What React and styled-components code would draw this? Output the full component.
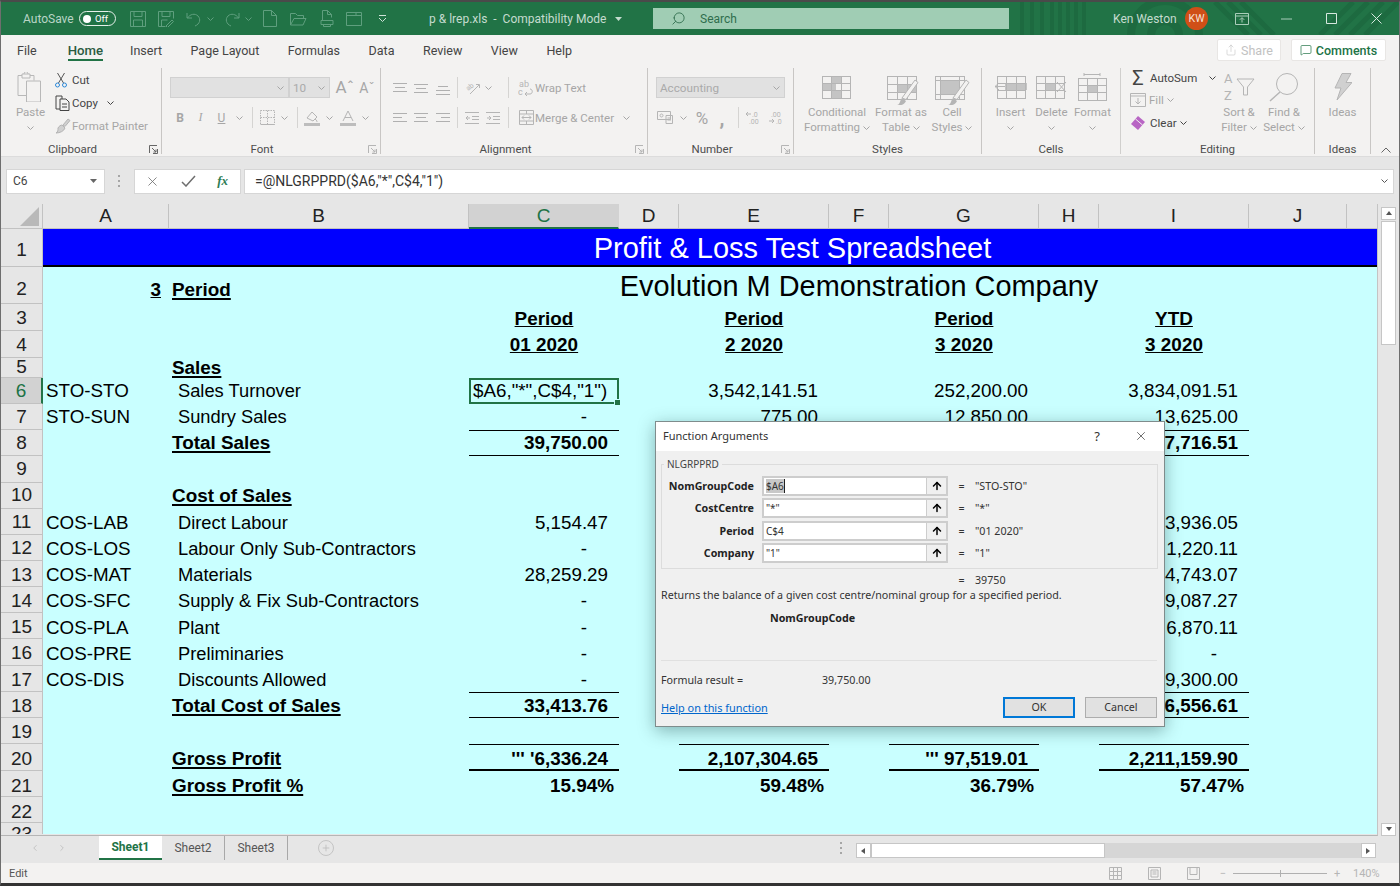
import React from "react";
import styled, { createGlobalStyle } from "styled-components";
import { Search, MessageSquare, Share, ArrowUp, X, Plus, ChevronLeft, ChevronRight } from "lucide-react";

const GlobalStyle = createGlobalStyle`
  html, body { margin: 0; padding: 0; background: #3c3c3c; }
  * { box-sizing: border-box; }
  body { font-family: "Roboto", "Noto Sans", sans-serif; }
`;

const DIS = "#a6a6a6";
const DARK = "#444";

const Window = styled.div`
  position: relative;
  width: 1400px;
  height: 886px;
  display: flex;
  flex-direction: column;
  overflow: hidden;
  background: #e6e6e6;
  border-top: 2px solid #4a4a4a;
  border-left: 1px solid #6e6e6e;
  border-right: 1px solid #6e6e6e;
  border-bottom: 3px solid #333;
`;

/* ---------- title bar ---------- */
const TitleBar = styled.div`
  position: relative;
  height: 33px;
  flex: none;
  display: flex;
  align-items: center;
  background: #217346;
  color: #cfe3d8;
  font-size: 12px;
  padding-left: 22px;
`;
const TitlePattern = styled.svg`
  position: absolute;
  left: 999px;
  top: 0;
  pointer-events: none;
`;
const AutoSave = styled.span`
  width: 56px;
  color: #b9d5c6;
  position: relative;
`;
const Toggle = styled.span`
  position: relative;
  width: 37px;
  height: 15px;
  border: 1.5px solid #e6f0ea;
  border-radius: 8px;
  display: flex;
  align-items: center;
  padding-left: 3px;
  gap: 4px;
  font-size: 9.5px;
  color: #fff;
  &::before {
    content: "";
    width: 8px;
    height: 8px;
    border-radius: 50%;
    background: #fff;
  }
`;
const QuickSlot = styled.span`
  position: relative;
  width: ${(p) => p.$w || 28}px;
  margin-left: ${(p) => p.$ml || 0}px;
  display: flex;
  justify-content: center;
  color: #5f9f7e;
`;
const DocTitle = styled.span`
  position: relative;
  margin-left: 33px;
  width: 224px;
  display: flex;
  gap: 6px;
  align-items: center;
  white-space: pre;
  color: #c5dccf;
`;
const SearchBox = styled.div`
  position: relative;
  width: 356px;
  height: 21px;
  background: #a0cdb4;
  display: flex;
  align-items: center;
  padding-left: 18px;
  gap: 14px;
  color: #2f6d4d;
  font-size: 12px;
`;
const SearchIcon = styled(Search)`
  transform: scaleX(-1);
`;
const UserName = styled.span`
  position: relative;
  margin-left: 104px;
  width: 72px;
  color: #c5dccf;
`;
const Avatar = styled.span`
  position: relative;
  width: 23px;
  height: 23px;
  border-radius: 50%;
  background: #d04f17;
  color: #f6e2d8;
  font-size: 10.5px;
  display: flex;
  align-items: center;
  justify-content: center;
`;
const WinBtn = styled.span`
  position: relative;
  width: 45px;
  display: flex;
  justify-content: center;
  margin-left: ${(p) => p.$ml || 0}px;
  color: #a9cdb9;
`;

/* ---------- tabs ---------- */
const TabBar = styled.div`
  height: 33px;
  flex: none;
  display: flex;
  align-items: center;
  background: #f3f2f1;
  padding: 0 13px 3px 16px;
  font-size: 12.5px;
  color: #444;
`;
const Tab = styled.span`
  position: relative;
  margin-right: ${(p) => p.$mr || 28.5}px;
  color: ${(p) => (p.$active ? "#2b5b41" : "#444")};
  font-weight: ${(p) => (p.$active ? 500 : 400)};
  font-size: ${(p) => (p.$active ? 13.2 : 12.5)}px;
  ${(p) =>
    p.$active &&
    `&::after { content: ""; position: absolute; left: 0; right: 0; bottom: -3px; height: 2px; background: #217346; }`}
`;
const TabActions = styled.div`
  margin-left: auto;
  display: flex;
  gap: 10px;
`;
const PillBtn = styled.div`
  height: 22px;
  width: ${(p) => p.$w}px;
  background: #fff;
  border: 1px solid #e8e6e4;
  border-radius: 2px;
  display: flex;
  align-items: center;
  justify-content: center;
  gap: 4px;
  font-size: 12.5px;
  font-weight: ${(p) => (p.$on ? 500 : 400)};
  color: ${(p) => (p.$on ? "#217346" : "#c2c2c2")};
`;

/* ---------- ribbon ---------- */
const Ribbon = styled.div`
  height: 89px;
  flex: none;
  display: flex;
  background: #f3f2f1;
  border-bottom: 1px solid #dcdcdc;
  font-size: 11.5px;
  color: ${DIS};
`;
const Group = styled.div`
  position: relative;
  width: ${(p) => p.$w}px;
  height: 86px;
  flex: none;
  display: flex;
  flex-direction: column;
  border-right: 1px solid ${(p) => (p.$thin ? "#d0cfcd" : "#c8c6c4")};
`;
const GroupBody = styled.div`
  flex: 1;
  display: flex;
  padding-left: ${(p) => p.$pl || 0}px;
  min-height: 0;
`;
const GroupLabel = styled.div`
  height: 15px;
  margin-bottom: -3px;
  padding-right: ${(p) => p.$pr || 0}px;
  text-align: center;
  color: #4d4d4d;
  font-size: 11.5px;
  line-height: 15px;
  white-space: nowrap;
`;
const Launcher = styled.span`
  position: absolute;
  right: 3px;
  bottom: 0;
  display: flex;
  color: ${(p) => (p.$on ? "#666" : "#b5b5b5")};
`;
const Collapse = styled.span`
  margin-left: auto;
  margin-right: 8px;
  margin-bottom: 3px;
  align-self: flex-end;
  display: flex;
  color: #666;
`;
const BigBtn = styled.div`
  width: ${(p) => p.$w}px;
  display: flex;
  flex-direction: column;
  align-items: center;
  white-space: nowrap;
`;
const BigIcon = styled.div`
  height: 37px;
  display: flex;
  align-items: center;
  justify-content: center;
  flex: none;
`;
const BigLine = styled.div`
  height: 15px;
  line-height: 15px;
  display: flex;
  align-items: center;
  gap: 3px;
`;
const SmallCol = styled.div`
  width: ${(p) => p.$w}px;
  display: flex;
  flex-direction: column;
  margin-top: ${(p) => p.$mt || 0}px;
`;
const SmallRow = styled.div`
  height: ${(p) => p.$h || 23.3}px;
  flex: none;
  display: flex;
  align-items: center;
  gap: ${(p) => p.$gap ?? 3}px;
  white-space: nowrap;
  color: ${(p) => (p.$on ? DARK : DIS)};
`;
const ToolCol = styled.div`
  display: flex;
  flex-direction: column;
  gap: 9px;
  padding-top: 9px;
  padding-left: 8px;
`;
const ToolRow = styled.div`
  height: 21px;
  display: flex;
  align-items: center;
  white-space: nowrap;
`;
const Slot = styled.span`
  width: ${(p) => p.$w}px;
  margin-left: ${(p) => p.$ml || 0}px;
  flex: none;
  display: flex;
  align-items: center;
  justify-content: center;
  color: ${(p) => p.$c || DIS};
  font-size: ${(p) => p.$fs || 12}px;
  font-weight: ${(p) => p.$fw || 400};
  font-style: ${(p) => p.$it || "normal"};
  font-family: ${(p) => (p.$serif ? '"Liberation Serif", serif' : "inherit")};
`;
const Sep = styled.span`
  width: 1px;
  height: 21px;
  flex: none;
  background: #d5d4d2;
  margin-left: ${(p) => p.$l}px;
  margin-right: ${(p) => p.$r}px;
`;
const Combo = styled.span`
  width: ${(p) => p.$w}px;
  height: 21px;
  flex: none;
  background: #e1e1e1;
  border: 1px solid #d1d1d1;
  display: flex;
  align-items: center;
  justify-content: space-between;
  padding: 0 4px 0 3px;
  color: #aaa;
  font-size: 11.7px;
`;
const ToolText = styled.span`
  margin-left: ${(p) => p.$ml ?? 2}px;
  margin-right: ${(p) => p.$mr || 0}px;
`;
const FontA = styled.span`
  font-size: ${(p) => p.$fs}px;
  color: ${DIS};
  line-height: 1;
`;

const Chev = ({ c = DIS }) => (
  <svg width="7" height="4" viewBox="0 0 7 4" fill="none" stroke={c} strokeWidth="1">
    <path d="M.5 .5l3 3 3-3" />
  </svg>
);
const Ico = ({ w = 16, h = 16, sw = 1, c = "currentColor", children }) => (
  <svg width={w} height={h} viewBox={`0 0 ${w} ${h}`} fill="none" stroke={c} strokeWidth={sw}>
    {children}
  </svg>
);
const LaunchIco = () => (
  <Ico w={9} h={9}>
    <path d="M.5 8V.5H8M8.5 4v4.5H4M3 3l4 4M7 4.5V7H4.5" />
  </Ico>
);
const AlignIco = ({ rows, y = 0 }) => (
  <Ico w={14} h={14} c="#b0b0b0">
    {rows.map((r, i) => (
      <path key={i} d={`M${r[0]} ${y + 2.5 + i * 4}H${r[1]}`} />
    ))}
  </Ico>
);
const GridIco = ({ fills = [], cols = [0, 10, 21, 31], rows = [0, 11, 22, 33], extra = null, w = 34, h = 34 }) => (
  <Ico w={w} h={h} c="#b5b5b5">
    {fills.map((f, i) => (
      <rect key={i} x={f[0]} y={f[1]} width={f[2]} height={f[3]} fill="#c4c4c4" stroke="none" />
    ))}
    {cols.map((x) => (
      <path key={x} d={`M${x + 0.5} ${rows[0]}V${rows[rows.length - 1]}`} />
    ))}
    {rows.map((y) => (
      <path key={y} d={`M${cols[0]} ${y + 0.5}H${cols[cols.length - 1] + 1}`} />
    ))}
    {extra}
  </Ico>
);
const Brush = (
  <g>
    <path d="M19 29L32 11l3 2.5-12 17z" fill="#f3f2f1" stroke="#b5b5b5" />
    <path d="M14 36c3 0 3-5 5-7l4 3c-1 3-5 5-9 4z" fill="#b5b5b5" stroke="none" />
  </g>
);

/* ---------- formula bar ---------- */
const FormulaBar = styled.div`
  height: 47px;
  flex: none;
  display: flex;
  align-items: center;
  padding: 1px 5px 0 5px;
  background: #e6e6e6;
`;
const NameBox = styled.div`
  width: 99px;
  height: 25px;
  background: #fff;
  border: 1px solid #d6d6d6;
  display: flex;
  align-items: center;
  justify-content: space-between;
  padding: 0 7px 0 6px;
  font-size: 12px;
  color: #444;
`;
const Dots = styled.span`
  width: 2px;
  height: 12px;
  margin: ${(p) => p.$m || "0 14px 0 13px"};
  flex: none;
  background: repeating-linear-gradient(#a6a6a6 0 2px, transparent 2px 5px);
`;
const FxBox = styled.div`
  width: 107px;
  height: 25px;
  background: #fff;
  border: 1px solid #d6d6d6;
  display: flex;
  align-items: center;
  justify-content: space-between;
  padding: 0 12px 0 10px;
  color: #6e6e6e;
`;
const FxText = styled.span`
  font-family: "Liberation Serif", serif;
  font-style: italic;
  font-weight: 700;
  font-size: 13px;
  color: #2f7d55;
`;
const FormulaInput = styled.div`
  flex: 1;
  margin-left: 3px;
  height: 25px;
  background: #fff;
  border: 1px solid #d6d6d6;
  display: flex;
  align-items: center;
  justify-content: space-between;
  padding: 0 5px 0 10px;
  font-size: 14px;
  color: #333;
`;

/* ---------- sheet ---------- */
const SheetArea = styled.div`
  flex: 1;
  min-height: 0;
  display: flex;
  background: #e6e6e6;
`;
const SheetGrid = styled.div`
  width: 1377px;
  flex: none;
  display: grid;
  grid-template-columns: 42px 126px 300px 150px 60px 150px 60px 150px 60px 150px 98px 31px;
  grid-auto-rows: min-content;
  align-content: start;
  overflow: hidden;
  font-family: "Liberation Sans", Arial, sans-serif;
  font-size: 18.8px;
  color: #000;
  border-bottom: 1px solid #b5b5b5;
  border-right: 1px solid #c4c4c4;
  background: #e6e6e6;
`;
const ColHead = styled.div`
  height: 25px;
  display: flex;
  align-items: center;
  justify-content: center;
  font-size: 19px;
  background: ${(p) => (p.$sel ? "#d2d2d2" : "#e6e6e6")};
  border-right: 1px solid ${(p) => (p.$sel ? "#d2d2d2" : "#c2c2c2")};
  border-bottom: ${(p) => (p.$sel ? "2px solid #217346" : "1px solid #c2c2c2")};
  color: ${(p) => (p.$sel ? "#217346" : "#222")};
  overflow: hidden;
`;
const Corner = styled(ColHead)`
  align-items: flex-end;
  justify-content: flex-end;
  padding: 0 3px 2px 0;
`;
const RowHead = styled.div`
  height: ${(p) => p.$h}px;
  display: flex;
  align-items: ${(p) => (p.$clip ? "flex-start" : "center")};
  justify-content: center;
  overflow: hidden;
  padding-top: ${(p) => p.$pt || 0}px;
  background: ${(p) => (p.$sel ? "#d2d2d2" : "#e6e6e6")};
  border-right: ${(p) => (p.$sel ? "2px solid #217346" : "1px solid #c2c2c2")};
  border-bottom: ${(p) => (p.$clip ? "none" : "1px solid #c2c2c2")};
  color: ${(p) => (p.$sel ? "#217346" : "#222")};
  font-size: 19px;
`;
const Cell = styled.div`
  height: ${(p) => p.$h}px;
  display: flex;
  align-items: ${(p) => (p.$end ? "flex-end" : "center")};
  justify-content: ${(p) => p.$just || "flex-start"};
  padding-left: ${(p) => p.$pl ?? 3}px;
  padding-right: ${(p) => p.$pr ?? 0}px;
  padding-top: ${(p) => p.$pt || 0}px;
  padding-bottom: ${(p) => p.$pb || 0}px;
  background: #c9ffff;
  white-space: pre;
  min-width: 0;
  font-size: ${(p) => (p.$bold ? "18.9px" : p.$fs ? `${p.$fs}px` : "inherit")};
  font-weight: ${(p) => (p.$bold ? 700 : 400)};
  border-top: ${(p) => (p.$top ? "1px solid #000" : "none")};
  border-bottom: ${(p) => (p.$bot ? `${p.$bot}px solid #000` : "none")};
  ${(p) =>
    p.$under &&
    `text-decoration: underline; text-decoration-thickness: 2px; text-underline-offset: 2px;`}
`;
const SelectedCell = styled(Cell)`
  position: relative;
  z-index: 1;
  overflow: visible;
  outline: 2px solid #217346;
  outline-offset: -2px;
  padding-left: 4px;
  &::after {
    content: "";
    position: absolute;
    right: -2px;
    bottom: -2px;
    width: 5px;
    height: 5px;
    background: #217346;
    border: 1px solid #c9ffff;
  }
`;
const Banner = styled.div`
  grid-column: 2 / 13;
  height: 38px;
  display: flex;
  align-items: center;
  justify-content: center;
  padding: 2px 0 0 164px;
  background: #0000ff;
  color: #fff;
  font-size: 29px;
  border-bottom: 2px solid #000;
`;
const CompanyCell = styled(Cell)`
  grid-column: 4 / 11;
  font-size: 28.9px;
  justify-content: center;
  padding: 0 0 1px;
`;
const RightFill = styled(Cell)`
  grid-column: ${(p) => p.$col};
`;

const VScroll = styled.div`
  flex: 1;
  display: flex;
  flex-direction: column;
  padding: 3px 3px 0 3px;
  gap: 1px;
`;
const ScrollBtn = styled.div`
  height: ${(p) => p.$h || 13}px;
  flex: none;
  background: #fff;
  border: 1px solid #c6c6c6;
  display: flex;
  align-items: center;
  justify-content: center;
`;
const VThumb = styled.div`
  height: 124px;
  flex: none;
  background: #fff;
  border: 1px solid #c6c6c6;
`;
const Spacer = styled.div`
  flex: ${(p) => (p.$w ? "none" : 1)};
  width: ${(p) => (p.$w ? `${p.$w}px` : "auto")};
`;
const Tri = ({ d, s = 6 }) => {
  const paths = { up: "M0 4L3 0l3 4z", down: "M0 0l3 4 3-4z", left: "M4 0L0 3l4 3z", right: "M0 0l4 3-4 3z" };
  return (
    <svg width={s} height={s} viewBox="0 0 6 6">
      <path d={paths[d]} fill="#555" />
    </svg>
  );
};

/* ---------- bottom bars ---------- */
const SheetTabs = styled.div`
  height: 27px;
  flex: none;
  display: flex;
  align-items: flex-start;
  background: #e6e6e6;
  font-size: 12px;
  color: #555;
  padding-left: 20px;
`;
const NavBtn = styled.span`
  width: 27px;
  height: 24px;
  display: flex;
  align-items: center;
  justify-content: center;
  color: #bdbdbd;
`;
const SheetTab = styled.div`
  width: ${(p) => p.$w}px;
  height: 24px;
  display: flex;
  align-items: center;
  justify-content: center;
  background: ${(p) => (p.$active ? "#fff" : "transparent")};
  color: ${(p) => (p.$active ? "#217346" : "#555")};
  font-weight: ${(p) => (p.$active ? 700 : 400)};
  border-bottom: ${(p) => (p.$active ? "2px solid #217346" : "none")};
  border-right: ${(p) => (p.$active ? "none" : "1px solid #a8a8a8")};
`;
const AddSheet = styled.span`
  width: 16px;
  height: 16px;
  margin: 4px 0 0 30px;
  border: 1px solid #c4c4c4;
  border-radius: 50%;
  display: flex;
  align-items: center;
  justify-content: center;
  color: #bdbdbd;
`;
const HScroll = styled.div`
  width: 520px;
  height: 15px;
  margin-top: 7px;
  display: flex;
  background: #d6d6d6;
`;
const HThumb = styled.div`
  width: 234px;
  height: 15px;
  background: #fff;
  border: 1px solid #c6c6c6;
`;
const HBtn = styled(ScrollBtn)`
  width: 15px;
  height: 15px;
`;
const StatusBar = styled.div`
  height: 20px;
  flex: none;
  display: flex;
  align-items: center;
  background: #f3f2f1;
  padding: 0 8px;
  font-size: 11px;
  color: #555;
`;
const StatusIcons = styled.div`
  margin-left: auto;
  display: flex;
  align-items: center;
  color: #b5b5b5;
`;
const StatusSlot = styled.span`
  width: ${(p) => p.$w}px;
  display: flex;
  justify-content: center;
`;
const ZoomTrack = styled.span`
  position: relative;
  width: 94px;
  height: 1px;
  background: #b0b0b0;
  &::after {
    content: "";
    position: absolute;
    left: 47px;
    top: -3px;
    width: 1px;
    height: 7px;
    background: #b0b0b0;
  }
`;
const ZoomLabel = styled.span`
  width: 44px;
  padding-left: 6px;
  color: #b5b5b5;
  font-size: 11px;
`;

/* ---------- dialog ---------- */
const Dialog = styled.div`
  position: absolute;
  left: 654px;
  top: 419px;
  width: 510px;
  height: 306px;
  display: flex;
  flex-direction: column;
  background: #f0f0f0;
  border: 1px solid #7f8c8c;
  box-shadow: 0 4px 16px rgba(0, 40, 40, 0.35);
  font-family: "Noto Sans", sans-serif;
  font-size: 10.7px;
  color: #333;
  z-index: 5;
`;
const DialogTitle = styled.div`
  height: 29px;
  flex: none;
  background: #fff;
  display: flex;
  align-items: center;
  padding: 0 0 2px 7px;
  font-size: 11px;
  color: #333;
`;
const DialogTitleBtns = styled.div`
  margin-left: auto;
  display: flex;
  align-items: center;
  gap: 34px;
  padding-right: 16px;
  font-size: 13px;
`;
const DialogBody = styled.div`
  flex: 1;
  display: flex;
  flex-direction: column;
  padding: 7px 5px 0;
`;
const ArgBox = styled.fieldset`
  margin: 0;
  padding: 6px 0 0 0;
  width: 497px;
  height: 111px;
  border: 1px solid #dcdcdc;
  display: flex;
  flex-direction: column;
  gap: 2.4px;
`;
const ArgLegend = styled.legend`
  margin-left: 2px;
  padding: 0 3px;
  font-size: 10px;
  line-height: 12px;
  color: #444;
`;
const ArgRow = styled.div`
  height: 20px;
  display: flex;
  align-items: center;
`;
const ArgLabel = styled.span`
  width: 92px;
  text-align: right;
  font-weight: 700;
  margin-right: 8px;
  color: #222;
`;
const ArgInput = styled.div`
  width: 186px;
  height: 20px;
  background: #fff;
  border: 2px solid #cdcdcd;
  display: flex;
  align-items: center;
  font-size: 10px;
`;
const ArgText = styled.span`
  flex: 1;
  padding-left: 2px;
`;
const Highlight = styled.span`
  background: #c8c8c8;
  border-right: 1px solid #222;
`;
const RefBtn = styled.span`
  width: 20px;
  height: 16px;
  background: #f0f0f0;
  border-left: 1px solid #cdcdcd;
  display: flex;
  align-items: center;
  justify-content: center;
  color: #000;
`;
const EqSign = styled.span`
  width: 27px;
  text-align: center;
`;
const ResultRow = styled.div`
  height: 18px;
  margin-top: 2px;
  padding-left: 287px;
  display: flex;
  align-items: center;
`;
const Description = styled.div`
  height: 12px;
  line-height: 12px;
  white-space: nowrap;
`;
const ArgHelp = styled.div`
  font-weight: 700;
  padding-left: 109px;
  margin-top: 10px;
  height: 14px;
  line-height: 14px;
  color: #222;
`;
const Rule = styled.div`
  height: 1px;
  background: #e0e0e0;
  margin-top: 35px;
  width: 496px;
`;
const FormulaResult = styled.div`
  display: flex;
  margin-top: 12px;
  height: 14px;
  line-height: 14px;
`;
const ResultLabel = styled.span`
  width: 161px;
`;
const DialogFoot = styled.div`
  display: flex;
  align-items: center;
  margin-top: 9.5px;
  width: 496px;
`;
const HelpLink = styled.span`
  color: #0066cc;
  text-decoration: underline;
  margin-right: auto;
  font-size: 10.9px;
`;
const DlgBtn = styled.div`
  width: 72px;
  height: 21px;
  margin-left: 10px;
  background: #e1e1e1;
  border: ${(p) => (p.$primary ? "2px solid #0078d7" : "1px solid #adadad")};
  display: flex;
  align-items: center;
  justify-content: center;
`;

/* ---------- data ---------- */
const COLS = ["A", "B", "C", "D", "E", "F", "G", "H", "I", "J", ""];
const TABS = ["File", "Home", "Insert", "Page Layout", "Formulas", "Data", "Review", "View", "Help"];
const RH = 26.15;
const numPad = { "-": 32 };
const rows = [
  { n: 3, h: 27, c: "Period", e: "Period", g: "Period", i: "YTD", hdr: true, pt: 2 },
  { n: 4, h: 26.5, c: "01 2020", e: "2 2020", g: "3 2020", i: "3 2020", hdr: true, pt: 2 },
  { n: 5, h: 20.5, b: "Sales", bb: true },
  { n: 6, h: RH, a: "STO-STO", b: "Sales Turnover", c: '$A6,"*",C$4,"1")', e: "3,542,141.51", g: "252,200.00", i: "3,834,091.51", sel: true },
  { n: 7, h: RH, a: "STO-SUN", b: "Sundry Sales", c: "-", e: "775.00", g: "12,850.00", i: "13,625.00" },
  { n: 8, h: RH, b: "Total Sales", bb: true, c: "39,750.00", i: "7,716.51", total: 1, hide: true },
  { n: 9, h: RH },
  { n: 10, h: RH, b: "Cost of Sales", bb: true },
  { n: 11, h: RH, a: "COS-LAB", b: "Direct Labour", c: "5,154.47", i: "3,936.05", pt: 2 },
  { n: 12, h: RH, a: "COS-LOS", b: "Labour Only Sub-Contractors", c: "-", i: "1,220.11", pt: 2 },
  { n: 13, h: RH, a: "COS-MAT", b: "Materials", c: "28,259.29", i: "4,743.07", pt: 2 },
  { n: 14, h: RH, a: "COS-SFC", b: "Supply & Fix Sub-Contractors", c: "-", i: "9,087.27", pt: 2 },
  { n: 15, h: RH, a: "COS-PLA", b: "Plant", c: "-", i: "6,870.11", pt: 3 },
  { n: 16, h: RH, a: "COS-PRE", b: "Preliminaries", c: "-", i: "-", pt: 3 },
  { n: 17, h: RH, a: "COS-DIS", b: "Discounts Allowed", c: "-", i: "9,300.00", pt: 3 },
  { n: 18, h: RH, b: "Total Cost of Sales", bb: true, c: "33,413.76", i: "6,556.61", total: 1, hide: true, pt: 3 },
  { n: 19, h: RH, pt: 3 },
  { n: 20, h: 27, b: "Gross Profit", bb: true, c: "''' '6,336.24", e: "2,107,304.65", g: "''' 97,519.01", i: "2,211,159.90", total: 2, pt: 4 },
  { n: 21, h: 26.5, b: "Gross Profit %", bb: true, c: "15.94%", e: "59.48%", g: "36.79%", i: "57.47%", pct: true, pt: 4 },
  { n: 22, h: 26, pt: 4 },
  { n: 23, h: 11, clip: true },
];

const ValueCell = ({ row, v, col }) => {
  const hiddenByDialog = row.hide && (col === "e" || col === "g");
  const lined = row.total && !hiddenByDialog;
  const common = { $h: row.h, $pt: row.pt, $top: lined, $bot: lined ? row.total : 0, $bold: row.total || row.pct };
  if (row.hdr) return <Cell {...common} $bold $just="center" $pl={0}><u>{v}</u></Cell>;
  if (row.sel && col === "c") return <SelectedCell $h={row.h} $just="flex-start">{v}</SelectedCell>;
  return (
    <Cell {...common} $just="flex-end" $pl={0} $pr={row.pct ? 5 : numPad[v] || 11}>
      {v}
    </Cell>
  );
};

const SheetRow = ({ row }) => (
  <>
    <RowHead $h={row.h} $sel={row.sel} $clip={row.clip} $pt={row.pt}>{row.n}</RowHead>
    <Cell $h={row.h} $pt={row.pt}>{row.a}</Cell>
    <Cell $h={row.h} $pt={row.pt} $pl={row.bb ? 3 : 9} $bold={row.bb} $under={row.bb} $fs={18.3}>{row.b}</Cell>
    <ValueCell row={row} v={row.c} col="c" />
    <Cell $h={row.h} />
    <ValueCell row={row} v={row.e} col="e" />
    <Cell $h={row.h} />
    <ValueCell row={row} v={row.g} col="g" />
    <Cell $h={row.h} />
    <ValueCell row={row} v={row.i} col="i" />
    <RightFill $h={row.h} $col="11 / 13" />
  </>
);

const args = [
  { label: "NomGroupCode", text: <Highlight>$A6</Highlight>, value: '"STO-STO"' },
  { label: "CostCentre", text: '"*"', value: '"*"' },
  { label: "Period", text: "C$4", value: '"01 2020"' },
  { label: "Company", text: '"1"', value: '"1"' },
];

const tabMargin = { File: 31, Home: 27 };

const App = () => (
  <Window>
    <GlobalStyle />
    <TitleBar>
      <TitlePattern width="400" height="33" viewBox="0 0 400 33" fill="none" stroke="#1d6a40">
        <path d="M22 0v33M32 0v33M42 0v33M52 0v33M60 0v33M68 0v33M76 0v33M84 0v33" strokeWidth="4" />
        <circle cx="165" cy="33" r="14" strokeWidth="8" />
        <circle cx="165" cy="33" r="34" strokeWidth="8" />
        <path d="M215 0l33 33M228 0l33 33M241 0l33 33M320 33L353 0M335 33L368 0M350 33L383 0M365 33L398 0" strokeWidth="5" />
      </TitlePattern>
      <AutoSave>AutoSave</AutoSave>
      <Toggle>Off</Toggle>
      <QuickSlot $ml={8}>
        <Ico w={16} h={16}><path d="M.5.5h15v15H.5zM4 .5v5h8v-5M3.5 15.5V9h9v6.5" /></Ico>
      </QuickSlot>
      <QuickSlot>
        <Ico w={16} h={16}><path d="M.5.5h15v7M.5.5v15h7M4 .5v5h8v-5M3.5 15V9h6M8 15l6-6 1.5 1.5-6 6z" /></Ico>
      </QuickSlot>
      <QuickSlot $w={24} $ml={2}>
        <Ico w={16} h={16}><path d="M1 2v5h5M1.5 7C4 3 9 2 12 5s2 8-3 10" /></Ico>
      </QuickSlot>
      <QuickSlot $w={8}><Chev c="#5f9f7e" /></QuickSlot>
      <QuickSlot $w={24} $ml={6}>
        <Ico w={16} h={16}><path d="M15 2v5h-5M14.5 7C12 3 7 2 4 5s-2 8 3 10" /></Ico>
      </QuickSlot>
      <QuickSlot $w={8}><Chev c="#5f9f7e" /></QuickSlot>
      <QuickSlot $ml={4}>
        <Ico w={14} h={17}><path d="M.5.5h8l5 5v11H.5zM8.5.5v5h5" /></Ico>
      </QuickSlot>
      <QuickSlot>
        <Ico w={17} h={14}><path d="M.5 13V1.5h5l2 2h6v3M.5 13h12.5l3-6.5H4z" /></Ico>
      </QuickSlot>
      <QuickSlot $ml={1}>
        <Ico w={14} h={17}><path d="M2.5 10V.5h5l4 4v3M7.5.5v4h4M1 10.5h12v4H1zM3.5 14.5v2h7v-2" /></Ico>
      </QuickSlot>
      <QuickSlot $ml={-1}>
        <Ico w={16} h={14}><path d="M.5.5h15v13H.5zM.5 3.5h15M10 .5v3" /></Ico>
      </QuickSlot>
      <QuickSlot>
        <Ico w={9} h={9} c="#cfe3d8"><path d="M1 1.5h7M1 4l3.5 3.5L8 4" /></Ico>
      </QuickSlot>
      <DocTitle>
        p &amp; lrep.xls  -  Compatibility Mode <svg width="7" height="4" viewBox="0 0 7 4"><path d="M0 0h7L3.5 4z" fill="#c5dccf" /></svg>
      </DocTitle>
      <SearchBox>
        <SearchIcon size={15} strokeWidth={1.4} />
        Search
      </SearchBox>
      <UserName>Ken Weston</UserName>
      <Avatar>KW</Avatar>
      <WinBtn $ml={11}>
        <Ico w={14} h={12}><path d="M.5.5h13v11H.5zM.5 3h13M7 9.5V5M4.8 6.8L7 4.6l2.2 2.2" /></Ico>
      </WinBtn>
      <WinBtn>
        <Ico w={11} h={2}><path d="M0 1h11" /></Ico>
      </WinBtn>
      <WinBtn>
        <Ico w={11} h={11} c="#d7e8df"><path d="M.5.5h10v10H.5z" /></Ico>
      </WinBtn>
      <WinBtn>
        <Ico w={11} h={11} c="#d7e8df"><path d="M.5.5l10 10M10.5.5l-10 10" /></Ico>
      </WinBtn>
    </TitleBar>

    <TabBar>
      {TABS.map((t) => (
        <Tab key={t} $active={t === "Home"} $mr={tabMargin[t]}>{t}</Tab>
      ))}
      <TabActions>
        <PillBtn $w={64}><Share size={12} strokeWidth={1.2} />Share</PillBtn>
        <PillBtn $w={95} $on><MessageSquare size={12} strokeWidth={1.4} />Comments</PillBtn>
      </TabActions>
    </TabBar>

    <Ribbon>
      <Group $w={161}>
        <GroupBody $pl={5}>
          <BigBtn $w={49}>
            <BigIcon>
              <Ico w={28} h={30} c="#b8b8b8">
                <path d="M5 3.5H1v20h8M13 3.5h4v5M5 2h8v4H5zM7 2c0-3 4-3 4 0" />
                <path d="M9.5 9h14v21h-14z" fill="#f3f2f1" />
              </Ico>
            </BigIcon>
            <BigLine>Paste</BigLine>
            <BigLine><Chev /></BigLine>
          </BigBtn>
          <SmallCol $w={100}>
            <SmallRow $on $gap={5}>
              <Ico w={12} h={16} c="#555">
                <path d="M2.5 1l6 10M9.5 1l-6 10" />
                <circle cx="2.5" cy="13" r="2" stroke="#2b88d8" />
                <circle cx="9.5" cy="13" r="2" stroke="#2b88d8" />
              </Ico>
              Cut
            </SmallRow>
            <SmallRow $on $gap={1}>
              <Ico w={16} h={16} c="#444">
                <path d="M5 14H1V1h6v3M5 4h6l3 3v8.5H5zM7 9h5M7 12h5" />
              </Ico>
              Copy <Slot $w={24}><Chev c="#444" /></Slot>
            </SmallRow>
            <SmallRow $gap={1}>
              <Ico w={16} h={16} c="#b5b5b5">
                <path d="M8 7l5-6 2 1.5-5 6zM7 7l3 3c-1 3-5 5-9 5 2-1 2-3 2-5 1-2 3-3 4-3z" fill="#d0d0d0" />
              </Ico>
              Format Painter
            </SmallRow>
          </SmallCol>
        </GroupBody>
        <GroupLabel $pr={17}>Clipboard</GroupLabel>
        <Launcher $on><LaunchIco /></Launcher>
      </Group>

      <Group $w={219}>
        <ToolCol>
          <ToolRow>
            <Combo $w={119}><span /><Chev /></Combo>
            <Combo $w={41}>10<Chev /></Combo>
            <Slot $w={22} $ml={4}><FontA $fs={17}>Aˆ</FontA></Slot>
            <Slot $w={22}><FontA $fs={14}>Aˇ</FontA></Slot>
          </ToolRow>
          <ToolRow>
            <Slot $w={20} $fs={12} $fw={700}>B</Slot>
            <Slot $w={21} $fs={12} $it="italic" $serif>I</Slot>
            <Slot $w={21} $fs={12}><u>U</u></Slot>
            <Slot $w={14}><Chev /></Slot>
            <Sep $l={6} $r={6} />
            <Slot $w={16}>
              <Ico w={15} h={15} c="#b5b5b5"><path d="M.5.5h14v14H.5zM7.5.5v14M.5 7.5h14" strokeDasharray="1.5 1" /><path d="M.5 14.5h14" /></Ico>
            </Slot>
            <Slot $w={18}><Chev /></Slot>
            <Sep $l={4} $r={4} />
            <Slot $w={20}>
              <Ico w={16} h={16} c="#b5b5b5"><path d="M3 8l5-6 5 5-4 4zM11 9c2 1 2 3 2 3" /><rect x="0" y="13" width="16" height="3" fill="#bdbdbd" stroke="none" /></Ico>
            </Slot>
            <Slot $w={14}><Chev /></Slot>
            <Slot $w={24}>
              <Ico w={16} h={16} c="#b5b5b5"><path d="M3 11l5-10 5 10M5 7.5h6" /><rect x="0" y="13" width="16" height="3" fill="#bdbdbd" stroke="none" /></Ico>
            </Slot>
            <Slot $w={10}><Chev /></Slot>
          </ToolRow>
        </ToolCol>
        <Spacer />
        <GroupLabel $pr={18}>Font</GroupLabel>
        <Launcher><LaunchIco /></Launcher>
      </Group>

      <Group $w={267}>
        <ToolCol>
          <ToolRow>
            <Slot $w={21}><AlignIco rows={[[0, 14], [2, 12], [0, 14]]} /></Slot>
            <Slot $w={22}><AlignIco y={1} rows={[[0, 14], [2, 12], [0, 14]]} /></Slot>
            <Slot $w={21}><AlignIco y={3} rows={[[2, 12], [0, 14], [0, 14]]} /></Slot>
            <Sep $l={4} $r={4} />
            <Slot $w={20}>
              <Ico w={17} h={15} c="#b5b5b5">
                <text x="2" y="9" fontSize="7" fill="#b5b5b5" stroke="none" transform="rotate(-40 6 7)">ab</text>
                <path d="M6 14l9-9M12 4.5h3.5V8" />
              </Ico>
            </Slot>
            <Slot $w={12}><Chev /></Slot>
            <Sep $l={14} $r={8} />
            <Slot $w={16}>
              <Ico w={15} h={17} c="#b5b5b5">
                <text x="1" y="8" fontSize="9" fill="#b5b5b5" stroke="none">ab</text>
                <text x="0" y="16" fontSize="9" fill="#b5b5b5" stroke="none">c</text>
                <path d="M12 10c3 0 3 5 0 5H7M9 13l-2 2 2 2" />
              </Ico>
            </Slot>
            <ToolText>Wrap Text</ToolText>
          </ToolRow>
          <ToolRow>
            <Slot $w={21}><AlignIco rows={[[0, 14], [0, 9], [0, 14]]} /></Slot>
            <Slot $w={22}><AlignIco rows={[[0, 14], [2, 12], [0, 14]]} /></Slot>
            <Slot $w={21}><AlignIco rows={[[0, 14], [5, 14], [0, 14]]} /></Slot>
            <Sep $l={4} $r={4} />
            <Slot $w={20}>
              <Ico w={14} h={12} c="#b5b5b5"><path d="M0 .5h14M7 4.5h7M7 7.5h7M0 11.5h14M5 6H1M3 4L1 6l2 2" /></Ico>
            </Slot>
            <Slot $w={22}>
              <Ico w={14} h={12} c="#b5b5b5"><path d="M0 .5h14M7 4.5h7M7 7.5h7M0 11.5h14M1 6h4M3 4l2 2-2 2" /></Ico>
            </Slot>
            <Sep $l={4} $r={8} />
            <Slot $w={18}>
              <Ico w={15} h={15} c="#b5b5b5"><path d="M.5.5h14v14H.5zM.5 4h14M.5 11h14M7.5.5V4M7.5 11v3.5M3 7.5h9M5 5.5l-2 2 2 2M10 5.5l2 2-2 2" /></Ico>
            </Slot>
            <ToolText $ml={0} $mr={9}>Merge &amp; Center</ToolText>
            <Chev />
          </ToolRow>
        </ToolCol>
        <Spacer />
        <GroupLabel $pr={17}>Alignment</GroupLabel>
        <Launcher><LaunchIco /></Launcher>
      </Group>

      <Group $w={146}>
        <ToolCol>
          <ToolRow>
            <Combo $w={129}>Accounting<Chev /></Combo>
          </ToolRow>
          <ToolRow>
            <Slot $w={18}>
              <Ico w={16} h={13} c="#b5b5b5"><path d="M.5.5h13v8H.5zM9 4.5h6.5v8H9zM10.5 7h3.5M10.5 9h3.5M3 4.5c0-2 3-2 3 0s-3 2-3 0" /></Ico>
            </Slot>
            <Slot $w={18}><Chev /></Slot>
            <Slot $w={20} $fs={17}>%</Slot>
            <Slot $w={20} $fs={20} $fw={700}>,</Slot>
            <Sep $l={6} $r={5} />
            <Slot $w={18}>
              <Ico w={16} h={14} c="#b5b5b5">
                <text x="7" y="6" fontSize="7" fill="#b5b5b5" stroke="none">.0</text>
                <text x="4" y="13" fontSize="7" fill="#b5b5b5" stroke="none">.00</text>
                <path d="M6 3H1M3 1L1 3l2 2" />
              </Ico>
            </Slot>
            <Slot $w={26}>
              <Ico w={16} h={14} c="#b5b5b5">
                <text x="4" y="6" fontSize="7" fill="#b5b5b5" stroke="none">.00</text>
                <text x="9" y="13" fontSize="7" fill="#b5b5b5" stroke="none">.0</text>
                <path d="M2 10h5M5 8l2 2-2 2" />
              </Ico>
            </Slot>
          </ToolRow>
        </ToolCol>
        <Spacer />
        <GroupLabel $pr={17}>Number</GroupLabel>
        <Launcher><LaunchIco /></Launcher>
      </Group>

      <Group $w={188}>
        <GroupBody $pl={4}>
          <BigBtn $w={78}>
            <BigIcon>
              <GridIco w={30} h={24} cols={[0, 9, 19, 28]} rows={[1, 8, 15, 23]} fills={[[9, 1, 10, 7], [0, 8, 14, 7], [9, 15, 10, 8]]} />
            </BigIcon>
            <BigLine>Conditional</BigLine>
            <BigLine>Formatting <Chev /></BigLine>
          </BigBtn>
          <BigBtn $w={50}>
            <BigIcon>
              <GridIco cols={[4, 14, 24, 33]} rows={[7, 15, 23, 30]} w={36} h={36} fills={[[14, 15, 19, 8]]} extra={Brush} />
            </BigIcon>
            <BigLine>Format as</BigLine>
            <BigLine>Table <Chev /></BigLine>
          </BigBtn>
          <BigBtn $w={52}>
            <BigIcon>
              <GridIco cols={[1, 6, 25, 30]} rows={[7, 11, 25, 30]} w={36} h={36} fills={[[6, 11, 19, 14]]} extra={Brush} />
            </BigIcon>
            <BigLine>Cell</BigLine>
            <BigLine>Styles <Chev /></BigLine>
          </BigBtn>
        </GroupBody>
        <GroupLabel>Styles</GroupLabel>
      </Group>

      <Group $w={139} $thin>
        <GroupBody $pl={8}>
          <BigBtn $w={41}>
            <BigIcon>
              <GridIco w={32} h={24} cols={[2, 11, 21, 30]} rows={[1, 8, 15, 23]} fills={[[10, 8, 22, 7]]}
                extra={<path d="M10 11.5H0M4 8l-4 3.5L4 15" />} />
            </BigIcon>
            <BigLine>Insert</BigLine>
            <BigLine><Chev /></BigLine>
          </BigBtn>
          <BigBtn $w={41}>
            <BigIcon>
              <GridIco w={32} h={24} cols={[0, 9, 19, 28]} rows={[1, 8, 15, 23]} fills={[[9, 8, 10, 7]]}
                extra={<path d="M21 7l9 10M30 7l-9 10" />} />
            </BigIcon>
            <BigLine>Delete</BigLine>
            <BigLine><Chev /></BigLine>
          </BigBtn>
          <BigBtn $w={41}>
            <BigIcon>
              <GridIco w={30} h={28} cols={[0, 9, 19, 28]} rows={[5, 12, 19, 27]} fills={[[9, 12, 10, 7]]}
                extra={<path d="M6 1.5h16M6 0v3M22 0v3" />} />
            </BigIcon>
            <BigLine>Format</BigLine>
            <BigLine><Chev /></BigLine>
          </BigBtn>
        </GroupBody>
        <GroupLabel>Cells</GroupLabel>
      </Group>

      <Group $w={194}>
        <GroupBody $pl={9}>
          <SmallCol $w={87} $mt={-1.5}>
            <SmallRow $on $gap={4} $h={22.5}>
              <Slot $w={16} $fs={20} $c="#444">Σ</Slot>
              AutoSum <Slot $w={22}><Chev c="#444" /></Slot>
            </SmallRow>
            <SmallRow $gap={3} $h={22.5}>
              <Ico w={16} h={16} c="#b5b5b5"><path d="M.5 1.5h15v13H.5zM.5 4h15M8 6v6M5.5 9.5L8 12l2.5-2.5" /></Ico>
              Fill <Chev />
            </SmallRow>
            <SmallRow $on $gap={3} $h={22.5}>
              <Ico w={17} h={16}>
                <path d="M1 9l7-8 7 6-7 8z" fill="#b865c4" stroke="none" />
                <path d="M5.5 4l7 6" stroke="#f3f2f1" />
              </Ico>
              Clear <Chev c="#444" />
            </SmallRow>
          </SmallCol>
          <BigBtn $w={44}>
            <BigIcon>
              <Ico w={32} h={33} c="#b5b5b5">
                <text x="1" y="13" fontSize="13" fill="#b5b5b5" stroke="none">A</text>
                <text x="1" y="30" fontSize="13" fill="#b5b5b5" stroke="none">Z</text>
                <path d="M14 9h17l-6.5 8v8h-4v-8z" />
              </Ico>
            </BigIcon>
            <BigLine>Sort &amp;</BigLine>
            <BigLine>Filter <Chev /></BigLine>
          </BigBtn>
          <BigBtn $w={46}>
            <BigIcon>
              <Ico w={30} h={30} c="#b5b5b5">
                <circle cx="18" cy="12" r="10.5" />
                <path d="M11 20L1 29" strokeWidth="1.4" />
              </Ico>
            </BigIcon>
            <BigLine>Find &amp;</BigLine>
            <BigLine>Select <Chev /></BigLine>
          </BigBtn>
        </GroupBody>
        <GroupLabel>Editing</GroupLabel>
      </Group>

      <Group $w={56}>
        <GroupBody>
          <BigBtn $w={56}>
            <BigIcon>
              <Ico w={18} h={28} c="#b5b5b5">
                <path d="M8 .5h9l-5 9h6L3 27l4-12H1z" fill="#d0d0d0" />
              </Ico>
            </BigIcon>
            <BigLine>Ideas</BigLine>
          </BigBtn>
        </GroupBody>
        <GroupLabel>Ideas</GroupLabel>
      </Group>
      <Collapse>
        <Ico w={10} h={6}><path d="M.5 5.5L5 1l4.5 4.5" /></Ico>
      </Collapse>
    </Ribbon>

    <FormulaBar>
      <NameBox>C6<svg width="7" height="4" viewBox="0 0 7 4"><path d="M0 0h7L3.5 4z" fill="#666" /></svg></NameBox>
      <Dots />
      <FxBox>
        <X size={15} strokeWidth={1.3} />
        <Ico w={15} h={12} sw={1.5}><path d="M1 7l4 4 9-10" /></Ico>
        <FxText>fx</FxText>
      </FxBox>
      <FormulaInput>
        =@NLGRPPRD($A6,"*",C$4,"1")
        <Chev c="#555" />
      </FormulaInput>
    </FormulaBar>

    <SheetArea>
      <SheetGrid>
        <Corner>
          <svg width="19" height="19" viewBox="0 0 19 19"><path d="M19 0v19H0z" fill="#b9b9b9" /></svg>
        </Corner>
        {COLS.map((c) => (
          <ColHead key={c} $sel={c === "C"}>{c}</ColHead>
        ))}
        <RowHead $h={38} $pt={4}>1</RowHead>
        <Banner>Profit &amp; Loss Test Spreadsheet</Banner>
        <RowHead $h={37} $pt={8}>2</RowHead>
        <Cell $h={37} $end $pb={3} $bold $just="flex-end" $pr={8}><u>3</u></Cell>
        <Cell $h={37} $end $pb={3} $bold $under>Period</Cell>
        <CompanyCell $h={37} $end>Evolution M Demonstration Company</CompanyCell>
        <RightFill $h={37} $col="11 / 13" />
        {rows.map((r) => (
          <SheetRow key={r.n} row={r} />
        ))}
      </SheetGrid>
      <VScroll>
        <ScrollBtn><Tri d="up" /></ScrollBtn>
        <VThumb />
        <Spacer />
        <ScrollBtn><Tri d="down" /></ScrollBtn>
      </VScroll>
    </SheetArea>

    <SheetTabs>
      <NavBtn><ChevronLeft size={10} /></NavBtn>
      <NavBtn><ChevronRight size={10} /></NavBtn>
      <Spacer $w={24} />
      <SheetTab $w={63} $active>Sheet1</SheetTab>
      <SheetTab $w={63}>Sheet2</SheetTab>
      <SheetTab $w={63}>Sheet3</SheetTab>
      <AddSheet><Plus size={10} /></AddSheet>
      <Dots $m="6px 14px 0 506px" />
      <HScroll>
        <HBtn><Tri d="left" /></HBtn>
        <HThumb />
        <Spacer />
        <HBtn><Tri d="right" /></HBtn>
      </HScroll>
    </SheetTabs>

    <StatusBar>
      Edit
      <StatusIcons>
        <StatusSlot $w={39}>
          <Ico w={13} h={13}><path d="M.5.5h12v12H.5zM4.5.5v12M8.5.5v12M.5 4.5h12M.5 8.5h12" /></Ico>
        </StatusSlot>
        <StatusSlot $w={39}>
          <Ico w={13} h={13}><path d="M.5.5h12v12H.5zM3 3h7v7H3zM4.5 5h4M4.5 7h4" /></Ico>
        </StatusSlot>
        <StatusSlot $w={39}>
          <Ico w={13} h={13}><path d="M.5.5h12v12H.5zM3 .5v7h7v-7" /></Ico>
        </StatusSlot>
        <StatusSlot $w={20}>−</StatusSlot>
        <ZoomTrack />
        <StatusSlot $w={20}>+</StatusSlot>
        <ZoomLabel>140%</ZoomLabel>
      </StatusIcons>
    </StatusBar>

    <Dialog>
      <DialogTitle>
        Function Arguments
        <DialogTitleBtns>
          <span>?</span>
          <X size={14} strokeWidth={1.2} />
        </DialogTitleBtns>
      </DialogTitle>
      <DialogBody>
        <ArgBox>
          <ArgLegend>NLGRPPRD</ArgLegend>
          {args.map((a) => (
            <ArgRow key={a.label}>
              <ArgLabel>{a.label}</ArgLabel>
              <ArgInput>
                <ArgText>{a.text}</ArgText>
                <RefBtn><ArrowUp size={12} strokeWidth={3} /></RefBtn>
              </ArgInput>
              <EqSign>=</EqSign>
              <span>{a.value}</span>
            </ArgRow>
          ))}
        </ArgBox>
        <ResultRow><EqSign>=</EqSign>39750</ResultRow>
        <Description>Returns the balance of a given cost centre/nominal group for a specified period.</Description>
        <ArgHelp>NomGroupCode</ArgHelp>
        <Rule />
        <FormulaResult>
          <ResultLabel>Formula result =</ResultLabel>
          39,750.00
        </FormulaResult>
        <DialogFoot>
          <HelpLink>Help on this function</HelpLink>
          <DlgBtn $primary>OK</DlgBtn>
          <DlgBtn>Cancel</DlgBtn>
        </DialogFoot>
      </DialogBody>
    </Dialog>
  </Window>
);

export default App;
